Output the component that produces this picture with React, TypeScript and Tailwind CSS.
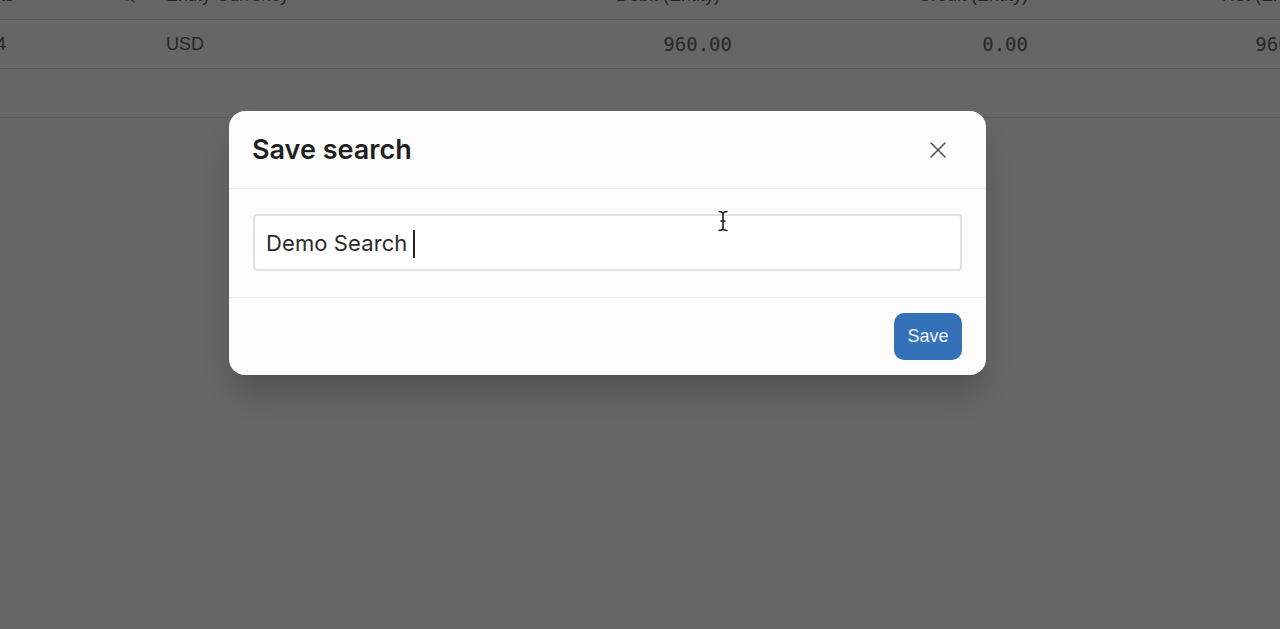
import React from 'react';

const rows = [
  { id: '1234', currency: 'USD', debit: '960.00', credit: '0.00', net: '960.00' },
];

function SearchIcon() {
  return (
    <svg width="16" height="16" viewBox="0 0 16 16" fill="none" stroke="currentColor" strokeWidth="1.5">
      <circle cx="7" cy="7" r="5" />
      <line x1="10.6" y1="10.6" x2="14.5" y2="14.5" />
    </svg>
  );
}

function CloseIcon() {
  return (
    <svg width="18" height="18" viewBox="0 0 18 18" fill="none" stroke="#555" strokeWidth="1.6" strokeLinecap="round">
      <line x1="2" y1="2" x2="16" y2="16" />
      <line x1="16" y1="2" x2="2" y2="16" />
    </svg>
  );
}

function IBeam() {
  return (
    <svg width="12" height="22" viewBox="0 0 12 22" fill="none" stroke="#222" strokeWidth="1.6">
      <path d="M1.5 1.5c2.2 0 4.5.6 4.5 2.4M10.5 1.5c-2.2 0-4.5.6-4.5 2.4M6 3.9v14.2M1.5 20.5c2.2 0 4.5-.6 4.5-2.4M10.5 20.5c-2.2 0-4.5-.6-4.5-2.4" />
      <line x1="3.5" y1="11" x2="8.5" y2="11" />
    </svg>
  );
}

function Table() {
  return (
    <div className="-mt-[28px] w-full overflow-hidden font-['Liberation_Sans',Arial,sans-serif] text-[18px] text-[#5f5f5f]">
      {/* header */}
      <div className="flex h-[48px] items-center border-b border-[#e1e1e1]">
        <div className="flex w-[166px] shrink-0 items-center">
          <span className="-ml-[60px] w-[68px] text-right">Accounts</span>
          <span className="ml-auto mr-[30px] text-[#777]">
            <SearchIcon />
          </span>
        </div>
        <div className="w-[300px] shrink-0">Entity Currency</div>
        <div className="w-[266px] shrink-0 pr-[12px] text-right">Debit (Entity)</div>
        <div className="w-[296px] shrink-0 text-right">Credit (Entity)</div>
        <div className="w-[296px] shrink-0 pr-[12px] text-right">Net (Entity)</div>
      </div>
      {rows.map((r) => (
        <div key={r.id} className="flex h-[49px] items-center border-b border-[#e1e1e1]">
          <div className="w-[166px] shrink-0">
            <span className="-ml-[38px] inline-block w-[44px] text-right">{r.id}</span>
          </div>
          <div className="w-[300px] shrink-0">{r.currency}</div>
          <div className="w-[266px] shrink-0 text-right font-['DejaVu_Sans_Mono',monospace] text-[19px]">{r.debit}</div>
          <div className="w-[296px] shrink-0 text-right font-['DejaVu_Sans_Mono',monospace] text-[19px]">{r.credit}</div>
          <div className="w-[296px] shrink-0 text-right font-['DejaVu_Sans_Mono',monospace] text-[19px]">{r.net}</div>
        </div>
      ))}
      <div className="h-[49px] border-b border-[#e1e1e1]" />
    </div>
  );
}

export default function App() {
  return (
    <div className="relative h-[629px] w-[1280px] overflow-hidden bg-white">
      <Table />

      {/* overlay */}
      <div className="absolute inset-0 bg-black/60">
        <div className="ml-[229px] mt-[111px] w-[757px] rounded-[16px] bg-[#fcfcfc] shadow-[0_22px_30px_-6px_rgba(0,0,0,0.22)]">
          <div className="flex h-[78px] items-center justify-between border-b border-[#ededed] pl-[23px] pr-[38px]">
            <h2 className="mt-[2px] font-['Inter',sans-serif] text-[27px] font-semibold text-[#1f1f1f]">
              Save search
            </h2>
            <button className="flex h-[20px] w-[20px] items-center justify-center">
              <CloseIcon />
            </button>
          </div>

          <div className="relative border-b border-[#ededed] px-[24px] pb-[26px] pt-[25px]">
            <div className="flex h-[57px] items-center rounded-[4px] border-2 border-[#e2e2e2] bg-white px-[11px] pt-[2px] font-['Inter',sans-serif] text-[22px] text-[#2a2a2a]">
              <span className="tracking-[0.1px]">Demo Search</span>
              <span className="ml-[6px] inline-block h-[28px] w-[2px] bg-[#222]" />
            </div>
            <div className="absolute left-[488px] top-[21px]">
              <IBeam />
            </div>
          </div>

          <div className="flex justify-end px-[24px] py-[15px]">
            <button className="h-[47px] w-[68px] rounded-[10px] bg-[#3571b8] font-['Liberation_Sans',Arial,sans-serif] text-[18px] text-[#eef3fa]">
              Save
            </button>
          </div>
        </div>
      </div>
    </div>
  );
}
